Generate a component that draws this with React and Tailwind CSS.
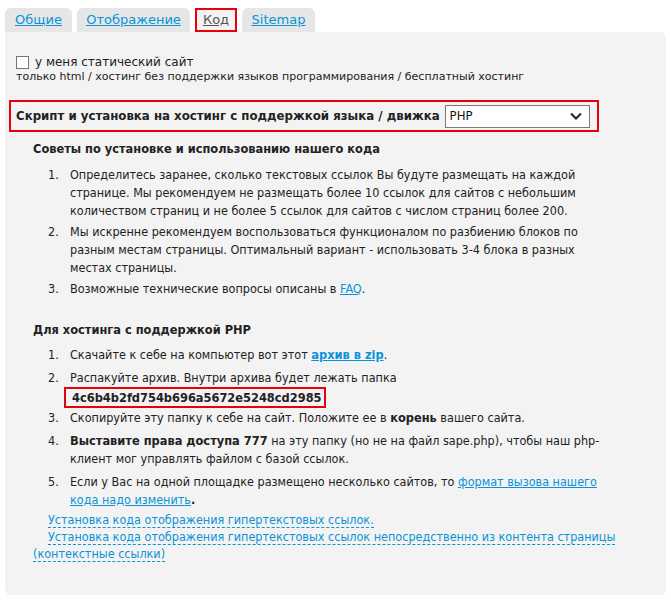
import React from "react"

const tabs = [
  { label: "Общие", w: "w-[67px]" },
  { label: "Отображение", w: "w-[113px]" },
  { label: "Код", w: "w-[42px]", active: true },
  { label: "Sitemap", w: "w-[73px]" },
]

function Tabs() {
  return (
    <div className="flex items-end gap-[5px] h-[24px]">
      {tabs.map((t) =>
        t.active ? (
          <div
            key={t.label}
            className={`${t.w} h-[24px] border-2 border-[#e8000b] bg-[#f3f3f3] flex items-center justify-center`}>
            <span className="underline text-[#555] text-[13px]">{t.label}</span>
          </div>
        ) : (
          <div
            key={t.label}
            className={`${t.w} h-[24px] rounded-t-[6px] bg-[#e6e6e6] flex items-center justify-center`}>
            <a href="#" className="underline text-[#0a94d6] text-[13px]">
              {t.label}
            </a>
          </div>
        )
      )}
    </div>
  )
}

function Item({ n, children }) {
  return (
    <li className="flex">
      <span className="w-[22px] shrink-0">{n}.</span>
      <div className="flex-1">{children}</div>
    </li>
  )
}

export default function App() {
  return (
    <div className="w-[671px] h-[601px] bg-white px-[5px] pt-[8px] font-['DejaVu_Sans',sans-serif] text-[#222]">
      <Tabs />
      <div className="h-[563px] bg-[#f3f3f3] rounded-b-[6px] rounded-tr-[6px] pt-[23px]">
        {/* static site */}
        <div className="pl-[11px] text-[12px]">
          <label className="flex items-center gap-[6px] h-[14px]">
            <span className="w-[13px] h-[13px] border border-[#767676] bg-white" />
            <span>у меня статический сайт</span>
          </label>
          <div className="text-[11px] leading-[14px] mt-[1px]">
            только html / хостинг без поддержки языков программирования / бесплатный хостинг
          </div>
        </div>

        {/* select row */}
        <div className="ml-[4px] mt-[16px] w-[590px] h-[32px] border-2 border-[#e8000b] flex items-center pl-[5px] gap-[5px]">
          <span className="font-['DejaVu_Sans_Condensed',sans-serif] font-bold text-[13.1px] whitespace-nowrap">
            Скрипт и установка на хостинг с поддержкой языка / движка
          </span>
          <div className="shrink-0 w-[145px] h-[23px] border border-[#7a7a7a] bg-white flex items-center justify-between pl-[4px] pr-[7px]">
            <span className="font-['DejaVu_Sans_Condensed',sans-serif] text-[13px] text-[#111]">PHP</span>
            <svg width="12" height="8" viewBox="0 0 12 8">
              <path d="M1 1.5 L6 6.5 L11 1.5" fill="none" stroke="#222" strokeWidth="2" />
            </svg>
          </div>
        </div>

        <div className="pl-[28px] font-['DejaVu_Sans_Condensed',sans-serif] text-[12.5px] leading-[18px]">
          <div className="font-bold mt-[8px] text-[12.7px]">Советы по установке и использованию нашего кода</div>
          <ol className="mt-[8px] pl-[15px] w-[579px] flex flex-col gap-[3px]">
            <Item n={1}>
              Определитесь заранее, сколько текстовых ссылок Вы будуте размещать на каждой странице. Мы
              рекомендуем не размещать более 10 ссылок для сайтов с небольшим количеством страниц и не
              более 5 ссылок для сайтов с числом страниц более 200.
            </Item>
            <Item n={2}>
              Мы искренне рекомендуем воспользоваться функционалом по разбиению блоков по разным местам
              страницы. Оптимальный вариант - использовать 3-4 блока в разных местах страницы.
            </Item>
            <Item n={3}>
              Возможные технические вопросы описаны в{" "}
              <a href="#" className="text-[#0a94d6] underline">
                FAQ
              </a>
              .
            </Item>
          </ol>

          <div className="font-bold mt-[23px] text-[12.7px]">Для хостинга с поддержкой PHP</div>
          <ol className="mt-[7px] pl-[15px] w-[579px] flex flex-col gap-[5px]">
            <Item n={1}>
              Скачайте к себе на компьютер вот этот{" "}
              <a href="#" className="text-[#0a94d6] underline font-bold text-[12.7px]">
                архив в zip
              </a>
              .
            </Item>
            <Item n={2}>
              Распакуйте архив. Внутри архива будет лежать папка
              <div className="-ml-[6px] -mb-[4px] w-[262px] h-[21px] border-2 border-[#e8000b] flex items-center pl-[6px] font-bold text-[12.7px]">
                4c6b4b2fd754b696a5672e5248cd2985
              </div>
            </Item>
            <Item n={3}>
              Скопируйте эту папку к себе на сайт. Положите ее в <b className="text-[12.7px]">корень</b> вашего сайта.
            </Item>
            <Item n={4}>
              <b className="text-[12.7px]">Выставите права доступа 777</b> на эту папку (но не на файл sape.php), чтобы наш
              php-клиент мог управлять файлом с базой ссылок.
            </Item>
            <Item n={5}>
              Если у Вас на одной площадке размещено несколько сайтов, то{" "}
              <a href="#" className="text-[#0a94d6] underline">
                формат вызова нашего кода надо изменить
              </a>
              <b>.</b>
            </Item>
          </ol>
          <div className="mt-[2px] leading-[17px] w-[600px]">
            <div className="pl-[15px]">
              <a href="#" className="text-[#0a94d6] border-b border-dashed border-[#0a94d6]">
                Установка кода отображения гипертекстовых ссылок.
              </a>
            </div>
            <div className="indent-[15px]">
              <a href="#" className="text-[#0a94d6] border-b border-dashed border-[#0a94d6]">
                Установка кода отображения гипертекстовых ссылок непосредственно из контента страницы
                (контекстные ссылки)
              </a>
            </div>
          </div>
        </div>
      </div>
    </div>
  )
}
